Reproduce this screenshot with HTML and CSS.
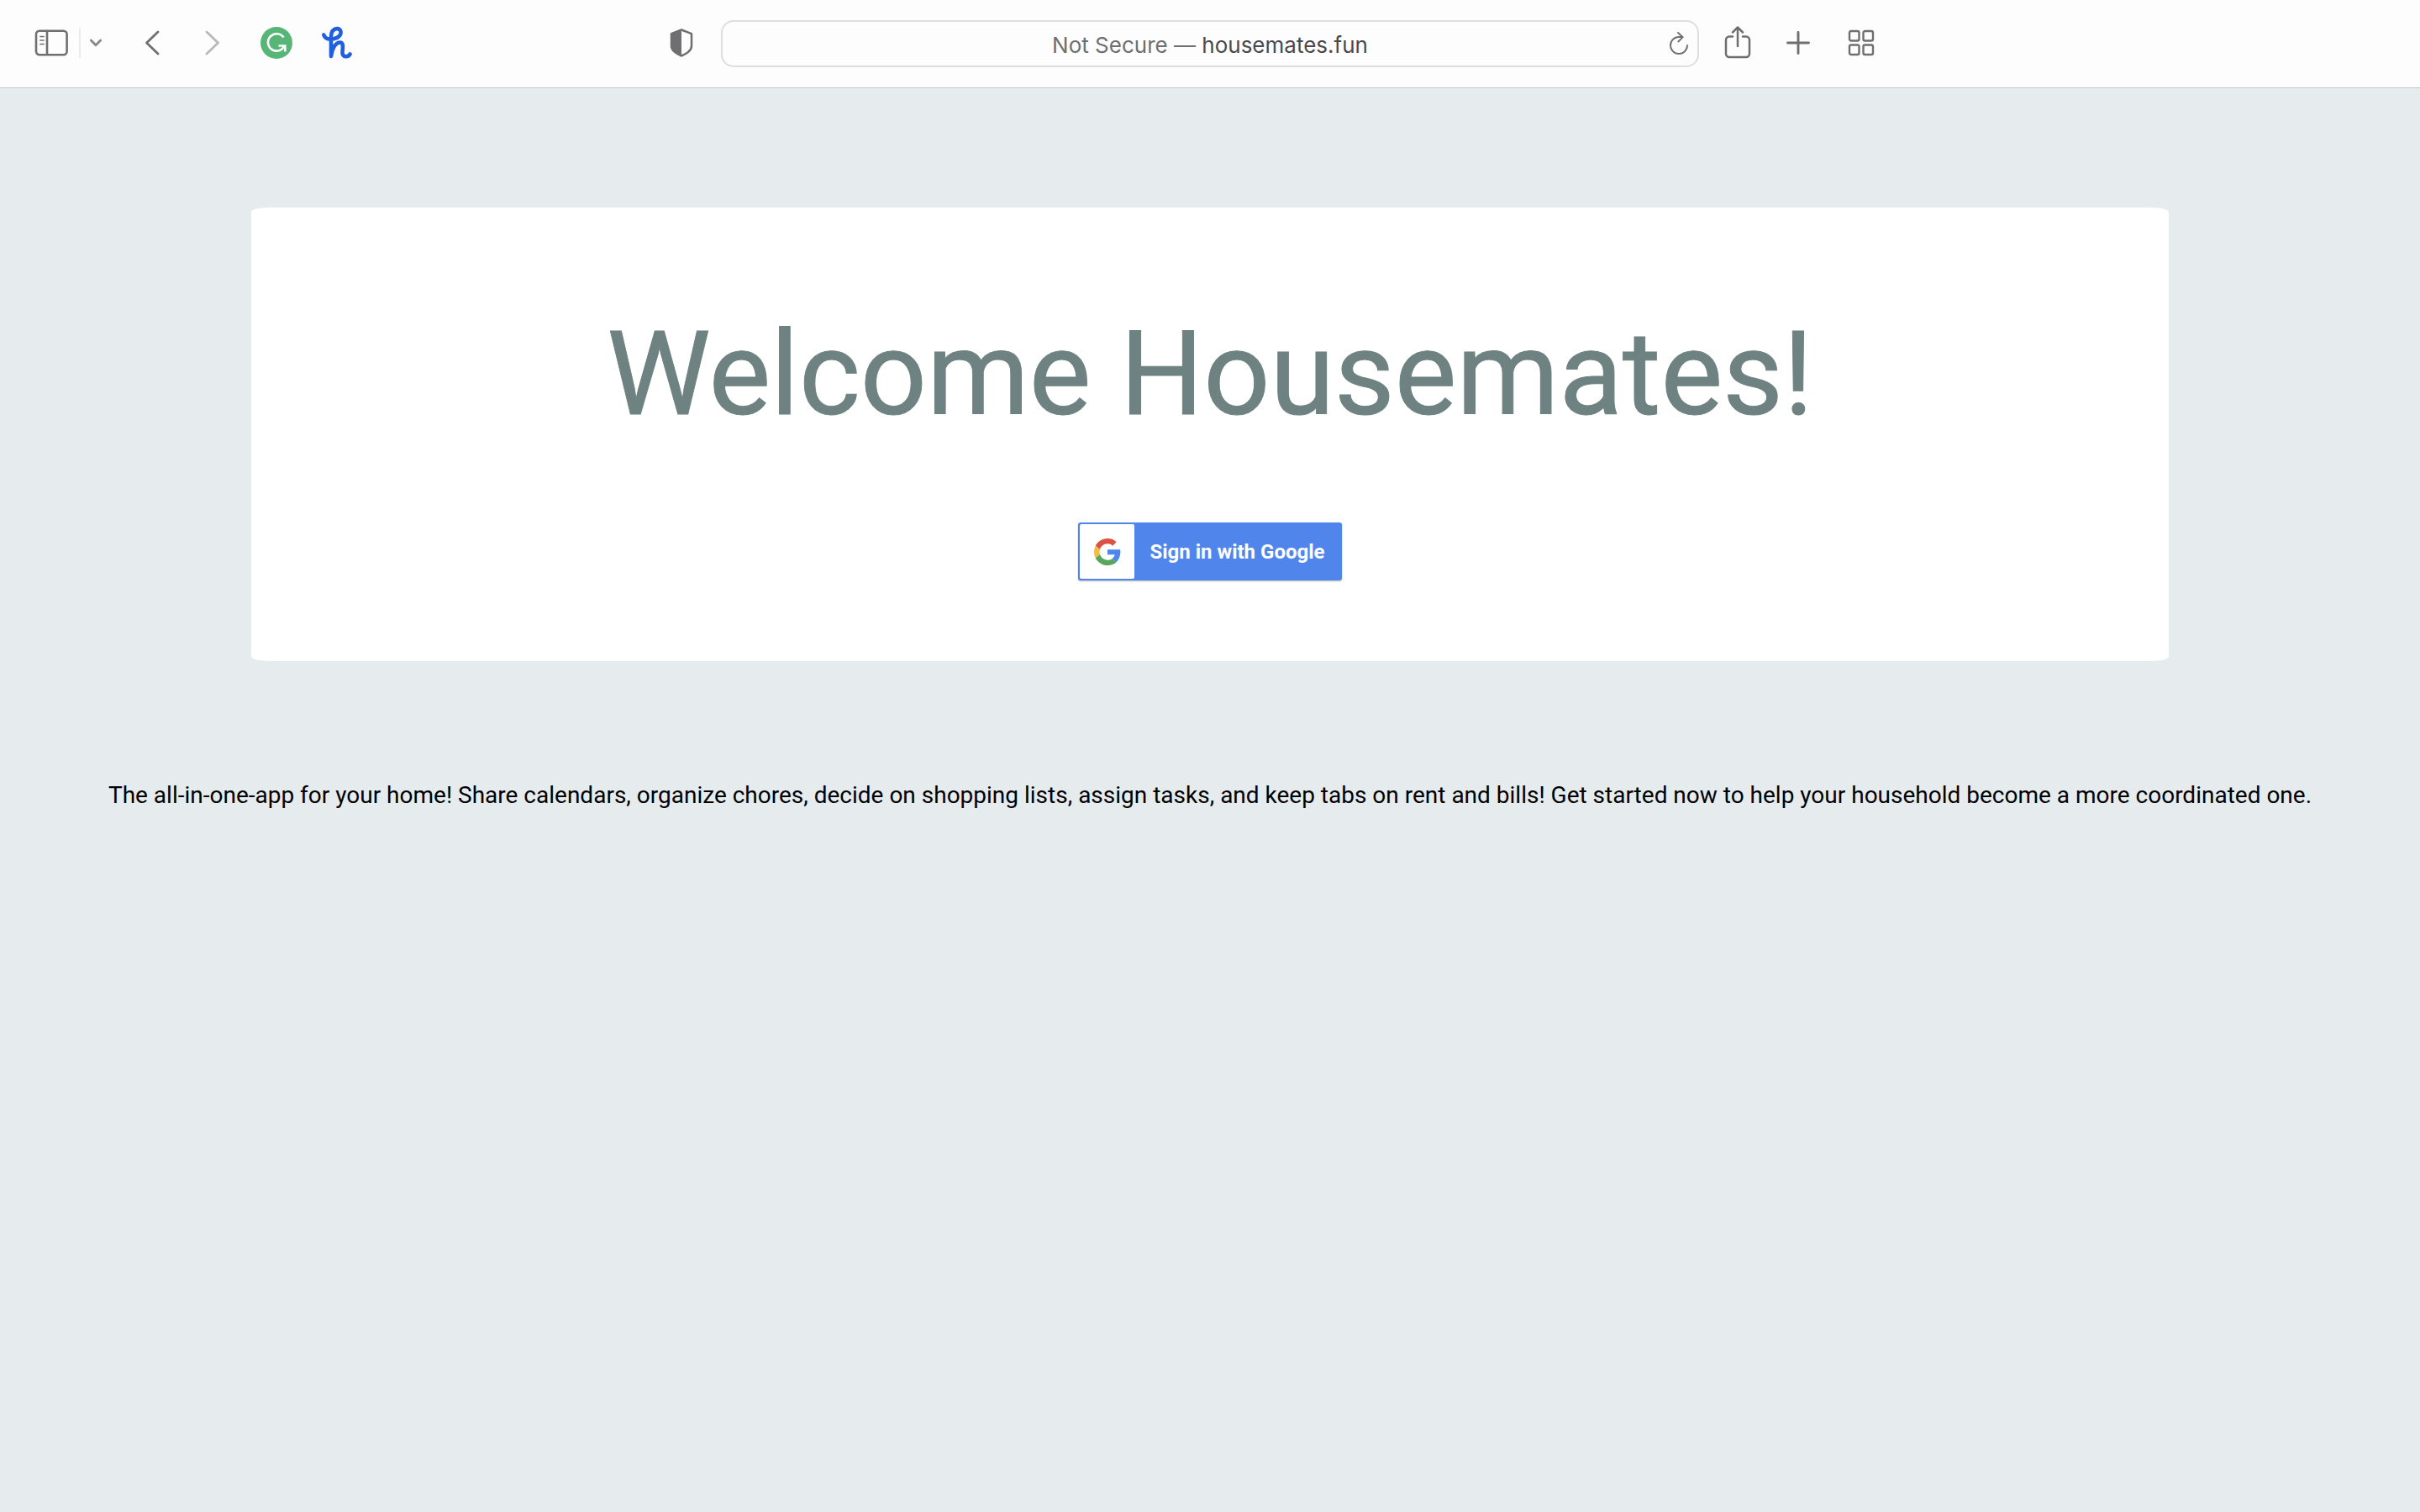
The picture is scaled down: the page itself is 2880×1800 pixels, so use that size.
FILE: index.html
```html
<!DOCTYPE html>
<html lang="en">
<head>
<meta charset="utf-8">
<title>Housemates</title>
<link rel="stylesheet" href="styles.css">
</head>
<body>
<header class="toolbar">
  <div class="tools tools-left">
    <button class="tool sidebar" aria-label="Show sidebar">
      <svg width="40" height="32" viewBox="0 0 40 32" fill="none" stroke="currentColor" stroke-width="2.6" stroke-linecap="round"><rect x="2" y="1.7" width="36.6" height="28.6" rx="4"/><path d="M15 2v28"/><path d="M7 8.500h4M7 13h4M7 17.500h4" stroke-width="1.700"/></svg>
    </button>
    <span class="divider"></span>
    <button class="tool menu" aria-label="Tab groups">
      <svg width="16" height="12" viewBox="0 0 16 12" fill="none" stroke="currentColor" stroke-width="2.800" stroke-linecap="round" stroke-linejoin="round"><path d="M2.300 3 8 8.800 13.700 3"/></svg>
    </button>
    <button class="tool back" aria-label="Back">
      <svg width="18" height="30" viewBox="0 0 18 30" fill="none" stroke="currentColor" stroke-width="2.800" stroke-linecap="round" stroke-linejoin="round"><path d="M16 2 2.500 15 16 28"/></svg>
    </button>
    <button class="tool forward" aria-label="Forward">
      <svg width="18" height="30" viewBox="0 0 18 30" fill="none" stroke="currentColor" stroke-width="2.800" stroke-linecap="round" stroke-linejoin="round"><path d="M2 2 15.500 15 2 28"/></svg>
    </button>
    <button class="tool grammar" aria-label="Grammar">
      <svg width="38" height="38" viewBox="0 0 38 38" fill="none"><circle cx="19" cy="19" r="19" fill="#57b576"/><path d="M27.500 12.500A10.200 10.200 0 1 0 28.500 22.500M21.500 22.500h7.800v7" stroke="#fff" stroke-width="2.600"/></svg>
    </button>
    <button class="tool honey" aria-label="Coupons">
      <svg width="36" height="40" viewBox="0 0 36 40" fill="none" stroke="currentColor" stroke-width="4.600" stroke-linecap="round" stroke-linejoin="round"><path d="M2.300 10.500C4 15.500 9 16.500 15 15 21 13.500 23.500 9.500 22.300 6 21 2.300 16 2.200 13 5.500 10.500 8.500 11 12 11 18V36C12 27 16 20 21.500 19.500 26 19.500 25 25 24.500 31 24.200 37.500 31 37.500 33.500 33.500"/></svg>
    </button>
    <button class="tool shield" aria-label="Privacy report">
      <svg width="28" height="34" viewBox="0 0 28 34"><path d="M14 1.500 26 6.200V21c0 5-6.500 9.500-12 11.500C8.500 30.500 2 26 2 21V6.200Z" fill="none" stroke="currentColor" stroke-width="2.500" stroke-linejoin="round"/><path d="M14 1 1.500 6v15c0 5.500 7 10 12.500 12Z" fill="currentColor"/></svg>
    </button>
  </div>
  <div class="address">
    <span class="address-text"><span class="muted">Not Secure —</span> housemates.fun</span>
    <button class="tool reload" aria-label="Reload">
      <svg width="24" height="28" viewBox="0 0 24 28" fill="none" stroke="currentColor" stroke-width="1.900" stroke-linecap="round" stroke-linejoin="round"><path d="M22 16A10 10 0 1 1 12 6h4.500M11 1l5.700 5.200-5.300 5.300"/></svg>
    </button>
  </div>
  <div class="tools tools-right">
    <button class="tool" aria-label="Share">
      <svg width="32" height="40" viewBox="0 0 32 40" fill="none" stroke="currentColor" stroke-width="2.500" stroke-linecap="round" stroke-linejoin="round"><path d="M10 12.500H6a4 4 0 0 0-4 4V33a4 4 0 0 0 4 4h20a4 4 0 0 0 4-4V16.500a4 4 0 0 0-4-4h-4M16 24V2M10 7.500 16 1.500l6 6"/></svg>
    </button>
    <button class="tool plus" aria-label="New tab">
      <svg width="28" height="28" viewBox="0 0 28 28" fill="none" stroke="currentColor" stroke-width="2.900" stroke-linecap="round"><path d="M14 1.500v25M1.500 14h25"/></svg>
    </button>
    <button class="tool grid" aria-label="Tab overview">
      <svg width="32" height="32" viewBox="0 0 32 32" fill="none" stroke="currentColor" stroke-width="2.400"><rect x="2" y="2" width="11.500" height="11.500" rx="2"/><rect x="18.500" y="2" width="11.500" height="11.500" rx="2"/><rect x="2" y="18.500" width="11.500" height="11.500" rx="2"/><rect x="18.500" y="18.500" width="11.500" height="11.500" rx="2"/></svg>
    </button>
  </div>
</header>
<main class="page">
  <section class="card">
    <h1 class="title">Welcome Housemates!</h1>
    <button class="google">
      <span class="google-logo"><svg width="32" height="32" viewBox="0 0 48 48"><path fill="#dd5144" d="M24 9.500c3.540 0 6.710 1.220 9.210 3.600l6.850-6.850C35.900 2.380 30.470 0 24 0 14.620 0 6.510 5.380 2.560 13.220l7.980 6.190C12.430 13.720 17.740 9.500 24 9.500z"/><path fill="#4f86ec" d="M46.980 24.550c0-1.570-.150-3.090-.380-4.550H24v9.020h12.940c-.580 2.960-2.260 5.480-4.780 7.180l7.730 6c4.510-4.180 7.090-10.360 7.090-17.650z"/><path fill="#f2bd42" d="M10.530 28.590A14.500 14.500 0 0 1 9.770 24c0-1.600.270-3.140.760-4.590l-7.980-6.190A23.900 23.900 0 0 0 0 24c0 3.880.920 7.540 2.560 10.780l7.970-6.190z"/><path fill="#58a55c" d="M24 48c6.480 0 11.930-2.130 15.890-5.810l-7.730-6c-2.150 1.450-4.920 2.300-8.160 2.300-6.260 0-11.570-4.220-13.470-9.910l-7.980 6.190C6.510 42.620 14.620 48 24 48z"/></svg></span>
      <span class="google-label">Sign in with Google</span>
    </button>
  </section>
  <p class="intro">The all-in-one-app for your home! Share calendars, organize chores, decide on shopping lists, assign tasks, and keep tabs on rent and bills! Get started now to help your household become a more coordinated one.</p>
</main>
</body>
</html>
```
FILE: styles.css
```css
* { box-sizing: border-box; }

body {
  margin: 0;
  min-height: 100vh;
  background: #e6ecee;
  color: #000;
  font-family: Roboto, "Liberation Sans", sans-serif;
}

button {
  border: 0;
  padding: 0;
  background: none;
  font: inherit;
  cursor: pointer;
}

.toolbar {
  display: grid;
  grid-template-columns: 1fr 1164px 1fr;
  align-items: center;
  height: 105px;
  background: #fdfdfd;
  border-bottom: 1px solid #c3c8ca;
  color: #6f6f71;
  font-family: Inter, "Liberation Sans", sans-serif;
}

.tools { display: flex; align-items: center; padding-bottom: 2px; }
.tools-left { padding-left: 41px; }
.tool { display: flex; color: inherit; }
.tool svg { display: block; }
.divider { width: 2px; height: 36px; margin: 0 10px 0 13px; background: #ebebeb; }
.menu { color: #88888c; }
.back { margin-left: 50px; }
.forward { margin-left: 54px; color: #b9b9bb; }
.grammar { margin-left: 48px; }
.honey { margin-left: 35px; color: #2060df; }
.shield { margin: 0 33px 0 auto; }

.address {
  display: flex;
  align-items: center;
  height: 56px;
  padding: 0 10px 0 34px;
  border: 2px solid #dedede;
  border-radius: 15px;
}
.address-text { flex: 1; padding-top: 4px; text-align: center; font-size: 26px; line-height: 32px; color: #4a4a4c; }
.muted { color: #6f6f71; }

.tools-right { padding-left: 30px; }
.plus { margin-left: 42px; }
.grid { margin-left: 45px; }

.page { padding: 142px 14px 0; }
.card {
  display: flex;
  flex-direction: column;
  align-items: center;
  width: 80%;
  margin: 0 auto;
  padding: 118px 0 96px;
  background: #fff;
  border-radius: 1%;
}
.title {
  margin: 0 0 96px;
  font-size: 139px;
  font-weight: 400;
  line-height: 161px;
  color: #6f8282;
  -webkit-text-stroke: 1px #6f8282;
}

.google {
  display: flex;
  align-items: center;
  height: 69px;
  padding: 2px;
  background: #5086ec;
  border-radius: 3px;
  box-shadow: 0 1px 2px #0004;
  color: #fff;
}
.google-logo { display: grid; place-items: center; width: 65px; height: 65px; background: #fff; border-radius: 2px; }
.google-label { padding: 0 18px; font-size: 24px; font-weight: 700; line-height: 28px; }

.intro { margin: 142px 0 0; font-size: 28px; line-height: 36px; text-align: center; }
```
